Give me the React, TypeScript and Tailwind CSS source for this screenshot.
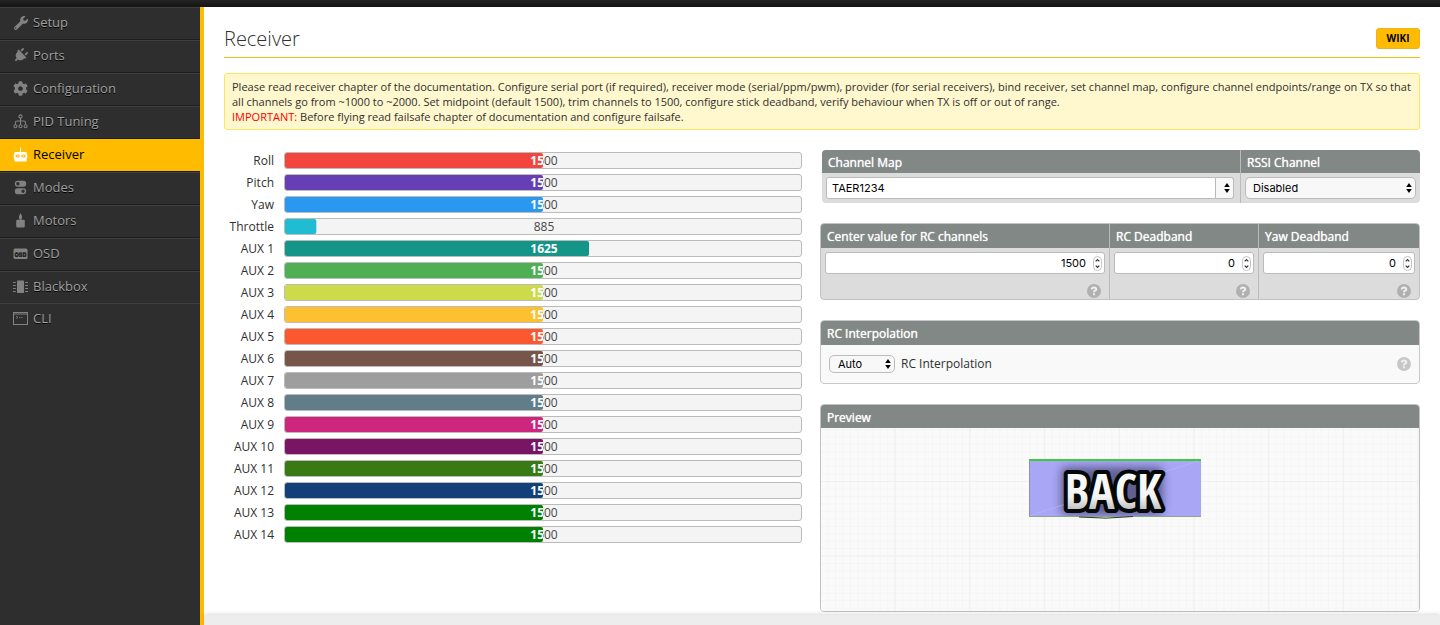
import React from "react";
import { FaWrench, FaPlug, FaCog } from "react-icons/fa";

const Svg = ({ children }: { children: React.ReactNode }) => (
  <svg viewBox="0 0 15 15" className="size-[15px]" fill="currentColor" aria-hidden="true">
    {children}
  </svg>
);

const SitemapIcon = () => (
  <Svg>
    <g fill="none" stroke="currentColor" strokeWidth="1.1">
      <circle cx="7.5" cy="2.5" r="1.6" />
      <path d="M7.5 4.1V10.500M2.500 10.500V8.500Q2.500 7 4 7H11Q12.500 7 12.500 8.500V10.500" />
      <circle cx="2.4" cy="12.200" r="1.5" />
      <circle cx="7.5" cy="12.200" r="1.5" />
      <circle cx="12.600" cy="12.200" r="1.5" />
    </g>
  </Svg>
);

const ReceiverIcon = () => (
  <Svg>
    <path
      fillRule="evenodd"
      d="M7 0.500h1v4.500h4.500q1.200 0 1.200 1.200v1.300h.600v3.500h-.600v2.700q0 .800-.800.800H2.100q-.800 0-.800-.800V11H.700V7.500h.600V6.200q0-1.200 1.200-1.200H7zM4 7.500a1.500 1.500 0 0 0 0 3h1.200a1.500 1.500 0 0 0 0-3zM9.800 7.500a1.500 1.500 0 0 0 0 3h1.200a1.500 1.500 0 0 0 0-3z"
    />
    <circle cx="4.600" cy="9" r="0.700" />
    <circle cx="10.400" cy="9" r="0.700" />
  </Svg>
);

const ModesIcon = () => (
  <Svg>
    <path
      fillRule="evenodd"
      d="M4.800.800h5.400a3 3 0 0 1 0 6h-5.400a3 3 0 0 1 0-6zM4.900 2.100a1.700 1.700 0 1 0 .01 3.400a1.700 1.700 0 1 0-.01-3.400zM4.800 8.200h5.400a3 3 0 0 1 0 6h-5.400a3 3 0 0 1 0-6zM10.100 9.500a1.700 1.700 0 1 0 .01 3.400a1.700 1.700 0 1 0-.01-3.400z"
    />
  </Svg>
);

const MotorsIcon = () => (
  <Svg>
    <path d="M7.500 0q1.700 3 1.600 4.500q0 1-.800 1.500v.800h2.500q1 0 1 1v5.200q0 1.500-1.500 1.500H4.700q-1.500 0-1.500-1.500V7.800q0-1 1-1h2.500V6q-.800-.500-.800-1.500Q5.800 3 7.500 0z" />
  </Svg>
);

const OsdIcon = () => (
  <Svg>
    <rect x="0.500" y="2.500" width="14" height="10.500" rx="1.500" />
    <text x="7.500" y="9.800" fontSize="5.500" fontWeight="700" textAnchor="middle" fill="#2e2e2e" fontFamily="Liberation Sans, sans-serif">
      OSD
    </text>
  </Svg>
);

const BlackboxIcon = () => (
  <Svg>
    <rect x="4" y="1.500" width="7" height="12.500" rx="0.800" />
    <path d="M0 3h2.800v1H0zM0 6h2.800v1H0zM0 9h2.800v1H0zM0 12h2.800v1H0zM12.200 3H15v1h-2.800zM12.200 6H15v1h-2.800zM12.200 9H15v1h-2.800zM12.200 12H15v1h-2.800z" />
  </Svg>
);

const CliIcon = () => (
  <Svg>
    <g fill="none" stroke="currentColor">
      <rect x="0.500" y="1.500" width="14" height="12" />
      <path d="M1 3H14" strokeWidth="1" />
      <path d="M3 5l2 1.300l-2 1.300M6 6.500h1.500M8.200 6.500h1.500" strokeWidth="0.800" />
    </g>
  </Svg>
);

const NAV = [
  { name: "Setup", icon: <FaWrench size={14} /> },
  { name: "Ports", icon: <FaPlug size={15} className="rotate-45" /> },
  { name: "Configuration", icon: <FaCog size={15} /> },
  { name: "PID Tuning", icon: <SitemapIcon /> },
  { name: "Receiver", icon: <ReceiverIcon /> },
  { name: "Modes", icon: <ModesIcon /> },
  { name: "Motors", icon: <MotorsIcon /> },
  { name: "OSD", icon: <OsdIcon /> },
  { name: "Blackbox", icon: <BlackboxIcon /> },
  { name: "CLI", icon: <CliIcon /> },
];

const MIN = 800;
const MAX = 2200;

const CHANNELS = [
  { name: "Roll", value: 1500, color: "bg-[#f1453d]" },
  { name: "Pitch", value: 1500, color: "bg-[#673fb4]" },
  { name: "Yaw", value: 1500, color: "bg-[#2b98f0]" },
  { name: "Throttle", value: 885, color: "bg-[#1fbcd2]" },
  { name: "AUX 1", value: 1625, color: "bg-[#159588]" },
  { name: "AUX 2", value: 1500, color: "bg-[#50ae55]" },
  { name: "AUX 3", value: 1500, color: "bg-[#cdda49]" },
  { name: "AUX 4", value: 1500, color: "bg-[#fdc02f]" },
  { name: "AUX 5", value: 1500, color: "bg-[#fc5830]" },
  { name: "AUX 6", value: 1500, color: "bg-[#785549]" },
  { name: "AUX 7", value: 1500, color: "bg-[#9e9e9e]" },
  { name: "AUX 8", value: 1500, color: "bg-[#617d8a]" },
  { name: "AUX 9", value: 1500, color: "bg-[#cf267d]" },
  { name: "AUX 10", value: 1500, color: "bg-[#7a1464]" },
  { name: "AUX 11", value: 1500, color: "bg-[#3a7a14]" },
  { name: "AUX 12", value: 1500, color: "bg-[#14407a]" },
  { name: "AUX 13", value: 1500, color: "bg-[#008000]" },
  { name: "AUX 14", value: 1500, color: "bg-[#008000]" },
];

function ChannelRow({ name, value, color }: { name: string; value: number; color: string }) {
  const rest = 100 - ((value - MIN) / (MAX - MIN)) * 100;
  return (
    <li className="flex items-center gap-[10px]">
      <span className="w-[50px] text-right text-xs leading-[17px] whitespace-nowrap">{name}</span>
      <div
        role="meter"
        aria-label={name}
        aria-valuemin={MIN}
        aria-valuemax={MAX}
        aria-valuenow={value}
        className="relative h-[17px] grow rounded-[3px] border border-[#bbb] bg-[#f4f4f4] pl-[2px] text-center text-xs leading-[16px] text-[#474747]"
      >
        {value}
        <div
          aria-hidden="true"
          className={"absolute inset-0 pl-[2px] font-bold text-white " + color}
          style={{ clipPath: `inset(0 ${rest}% 0 0 round 2px)` }}
        >
          {value}
        </div>
      </div>
    </li>
  );
}

const Arrows = () => (
  <svg viewBox="0 0 6 10" className="pointer-events-none absolute inset-y-0 right-1 my-auto h-[10px] w-[6px]" aria-hidden="true">
    <path d="M3 0L5.800 4H.200zM3 10L.200 6h5.600z" fill="#000" />
  </svg>
);

const Help = () => (
  <button
    type="button"
    aria-label="Help"
    className="flex size-[14px] items-center justify-center rounded-full bg-black/20"
  >
    <svg viewBox="0 0 14 14" className="size-[14px]" fill="none" stroke="#f0f0f0" strokeWidth="1.900" aria-hidden="true">
      <path d="M4.700 5.300Q4.900 3.500 7 3.500T9.300 5.200Q9.300 6.200 8.100 6.700T7 8.300M7 9.300v1.900" />
    </svg>
  </button>
);

const HEADING =
  "block bg-[#828885] px-[6px] text-xs leading-[25px] whitespace-nowrap text-white [text-shadow:0_0_1px_#fff]";

function NumberColumn({ id, title, value, first }: { id: string; title: string; value: number; first?: boolean }) {
  return (
    <div className={first ? "" : "border-l border-[#bbb]"}>
      <label htmlFor={id} className={HEADING + " h-6"}>
        {title}
      </label>
      <div className="px-1 pt-1">
        <div className="relative">
          <input
            id={id}
            type="number"
            defaultValue={value}
            className="block h-[22px] w-full appearance-none rounded-[3px] border border-[#bbb] bg-white pr-[18px] text-right font-[Inter] text-[11px] text-black [appearance:textfield] [&::-webkit-inner-spin-button]:appearance-none"
          />
          <svg viewBox="0 0 9 15" className="pointer-events-none absolute top-1 right-[3px] h-[15px] w-[9px]" fill="none" aria-hidden="true">
            <rect x="0.500" y="0.500" width="8" height="14" rx="4" stroke="#c4c4c4" />
            <path d="M2.700 5.400L4.500 3.500L6.300 5.400M2.700 9.600L4.500 11.500L6.300 9.600" stroke="#333" strokeWidth="1.200" />
          </svg>
        </div>
      </div>
      <div className="flex justify-end pt-[10px] pr-2 pb-[1px]">
        <Help />
      </div>
    </div>
  );
}

const Preview = () => (
  <div className="relative flex h-[183px] justify-center overflow-hidden bg-[#fafafa] pt-[25px]">
    <svg className="absolute inset-0 size-full" aria-hidden="true">
      <defs>
        <pattern id="minor" width="7.470" height="7.450" patternUnits="userSpaceOnUse" y="-20.500">
          <path d="M7 0V7.450M0 7H7.470" stroke="#f5f5f5" fill="none" />
        </pattern>
        <pattern id="major" width="74.700" height="74.500" patternUnits="userSpaceOnUse" y="-20.500">
          <path d="M74 0V74.500M0 74H74.700" stroke="#f0f0f0" strokeWidth="1.200" fill="none" />
        </pattern>
      </defs>
      <rect width="100%" height="100%" fill="url(#minor)" />
      <rect width="100%" height="100%" fill="url(#major)" />
    </svg>
    <svg viewBox="0 -6 172 76" className="relative -ml-[10px] h-[76px] w-[172px]" role="img" aria-label="BACK">
      <defs>
        <linearGradient id="face" x1="0" y1="0" x2="0" y2="1">
          <stop offset="0" stopColor="#ffffff" />
          <stop offset="0.600" stopColor="#f4f4f4" />
          <stop offset="0.850" stopColor="#b0b0b0" />
        </linearGradient>
        <filter id="glow" x="-20%" y="-20%" width="140%" height="140%">
          <feGaussianBlur stdDeviation="4" />
        </filter>
        <clipPath id="face-area">
          <rect y="2" width="172" height="56" />
        </clipPath>
      </defs>
      <rect width="172" height="58" fill="#a8a6f5" />
      <g clipPath="url(#face-area)">
        <rect x="32" y="8" width="102" height="48" rx="6" fill="#303050" opacity="0.600" filter="url(#glow)" />
      </g>
      <path d="M0 57L172 1" stroke="#bcbaf8" strokeWidth="0.600" />
      <path d="M0 57.500H172" stroke="#83a98a" />
      <path d="M.500 0V58" stroke="#9090b5" />
      <path d="M0 1H172" stroke="#42c742" strokeWidth="2" />
      <path d="M50 58q27 2.500 54-.500" stroke="#333" fill="none" />
      <text
        x="84"
        y="50"
        textAnchor="middle"
        fontFamily="Liberation Sans Narrow, Open Sans Condensed, Liberation Sans, sans-serif"
        fontWeight="700"
        fontSize="48"
        fill="url(#face)"
        stroke="#050808"
        strokeWidth="8"
        strokeLinejoin="round"
        paintOrder="stroke"
      >
        BACK
      </text>
    </svg>
  </div>
);

export default function App() {
  return (
    <div className="flex min-h-screen flex-col bg-white font-['Open_Sans',sans-serif] text-[#303030]">
      <header className="h-[7px] bg-linear-to-b from-[#242424] to-[#141414]" />
      <div className="flex grow">
        <nav className="w-[204px] shrink-0 border-r-4 border-[#ffbb00] bg-[#2e2e2e]">
          <ul>
            {NAV.map(({ name, icon }) => {
              const active = name === "Receiver";
              const last = name === "Blackbox" || name === "CLI";
              return (
                <li key={name}>
                  <a
                    href="#"
                    aria-current={active ? "page" : undefined}
                    className={
                      "flex items-start gap-[5px] border-t pl-[13px] text-[13px] leading-[28px] " +
                      (last ? "h-8 " : "h-[33px] border-b border-b-[#1e1e1e] ") +
                      (active
                        ? "border-t-[#ffbb00] bg-[#ffbb00] text-black"
                        : "border-t-[#3f3f3f] text-[#a0a0a0] [text-shadow:0_1px_rgba(0,0,0,1)]")
                    }
                  >
                    <span
                      className={
                        "flex h-[29px] w-[15px] items-center justify-center " +
                        (active ? "text-white" : "text-[#828282]")
                      }
                    >
                      {icon}
                    </span>
                    {name}
                  </a>
                </li>
              );
            })}
          </ul>
        </nav>

        <div className="flex min-w-0 grow flex-col">
          <main className="grow px-5 pt-[18px] pb-[3px]">
            <div className="flex h-[33px] items-start justify-between border-b border-[#f0bc12]">
              <h1 className="text-xl leading-[28px] font-light">Receiver</h1>
              <a
                href="#"
                className="mt-[3px] flex h-[21px] w-11 items-center justify-center rounded-[3px] border border-[#e8b423] bg-[#ffbb00] text-[10px] font-bold text-black"
              >
                WIKI
              </a>
            </div>

            <p className="mt-[15px] rounded-[3px] border border-[#ffe55f] bg-[#fff7cd] px-[7px] pt-[5px] pb-[5px] text-[11px] leading-[15px]">
              Please read receiver chapter of the documentation. Configure serial port (if required), receiver mode
              (serial/ppm/pwm), provider (for serial receivers), bind receiver, set channel map, configure channel
              endpoints/range on TX so that all channels go from ~1000 to ~2000. Set midpoint (default 1500), trim
              channels to 1500, configure stick deadband, verify behaviour when TX is off or out of range.
              <br />
              <span className="text-[#ff0000]">IMPORTANT:</span> Before flying read failsafe chapter of documentation
              and configure failsafe.
            </p>

            <div className="mt-5 grid grid-cols-[578fr_600fr] gap-[18px]">
              <ul className="flex flex-col gap-[5px] pt-[2px]">
                {CHANNELS.map((c) => (
                  <ChannelRow key={c.name} {...c} />
                ))}
              </ul>

              <div className="flex flex-col gap-5">
                <section className="ml-[2px] grid grid-cols-[418fr_180fr] overflow-hidden rounded-[4px] bg-[#dcdcdc]">
                  <div>
                    <label htmlFor="map" className={HEADING + " h-[23px]"}>
                      Channel Map
                    </label>
                    <div className="flex pt-1 pr-[6px] pb-1 pl-1">
                      <input
                        id="map"
                        type="text"
                        defaultValue="TAER1234"
                        className="h-[22px] min-w-0 grow rounded-l-[3px] border border-[#bbb] bg-white px-[5px] font-[Inter] text-[11px] text-black"
                      />
                      <div className="relative">
                        <select
                          aria-label="Channel map presets"
                          className="block h-[22px] w-[18px] appearance-none rounded-r-[3px] border border-l-0 border-[#bbb] bg-[#f8f8f8] text-transparent"
                        >
                          <option value="" />
                        </select>
                        <Arrows />
                      </div>
                    </div>
                  </div>
                  <div className="border-l border-[#bbb]">
                    <label htmlFor="rssi" className={HEADING + " h-[23px]"}>
                      RSSI Channel
                    </label>
                    <div className="px-1 pt-1 pb-1">
                      <div className="relative">
                        <select
                          id="rssi"
                          className="block h-[22px] w-full appearance-none rounded-[5px] border border-[#bbb] bg-[#f8f8f8] pl-[7px] font-[Inter] text-[11px] text-black"
                        >
                          <option>Disabled</option>
                        </select>
                        <Arrows />
                      </div>
                    </div>
                  </div>
                </section>

                <section className="grid grid-cols-[288fr_149fr_161fr] overflow-hidden rounded-[4px] border border-[#c2c2c2] bg-[#dcdcdc]">
                  <NumberColumn id="center" title="Center value for RC channels" value={1500} first />
                  <NumberColumn id="deadband" title="RC Deadband" value={0} />
                  <NumberColumn id="yaw-deadband" title="Yaw Deadband" value={0} />
                </section>

                <section className="overflow-hidden rounded-[4px] border border-[#c8c8c8] bg-[#f9f9f9]">
                  <h2 className={HEADING + " h-6"}>RC Interpolation</h2>
                  <div className="flex h-[38px] items-center gap-[6px] px-2">
                    <div className="relative">
                      <select
                        id="interpolation"
                        className="block h-[18px] w-[66px] appearance-none rounded-[5px] border border-[#bbb] bg-[#f8f8f8] pl-2 font-[Inter] text-[11px] leading-[16px] text-black"
                      >
                        <option>Auto</option>
                      </select>
                      <Arrows />
                    </div>
                    <label htmlFor="interpolation" className="grow text-xs leading-[18px]">
                      RC Interpolation
                    </label>
                    <Help />
                  </div>
                </section>

                <section className="overflow-hidden rounded-[4px] border border-[#c0c0c0]">
                  <h2 className={HEADING + " h-[23px]"}>Preview</h2>
                  <Preview />
                </section>
              </div>
            </div>
          </main>
          <footer className="h-[10px] bg-[#ededed] shadow-[0_-1px_4px_rgba(0,0,0,0.15)]" />
        </div>
      </div>
    </div>
  );
}
